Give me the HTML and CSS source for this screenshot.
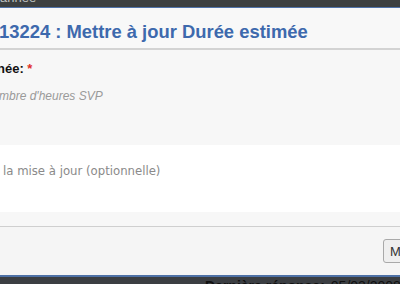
FILE: index.html
```html
<!DOCTYPE html>
<html lang="fr">
<head>
<meta charset="utf-8">
<link rel="stylesheet" href="styles.css">
</head>
<body>
<div class="page-top"><span class="page-top-text">année</span></div>
<div class="modal">
  <div class="modal-header">
    <h3 class="modal-title">13224 : Mettre à jour Durée estimée</h3>
  </div>
  <div class="modal-body">
    <div class="field-label">née: <span class="req">*</span></div>
    <div class="field-input">mbre d'heures SVP</div>
    <div class="field-textarea"><span class="ta-ph">la mise à jour (optionnelle)</span></div>
  </div>
  <div class="modal-footer">
    <button class="btn">Mettre à jour</button>
  </div>
</div>
<div class="page-bottom"><span class="pb-label">Dernière réponse:</span><span class="pb-date">05/03/2008 1</span></div>
</body>
</html>
```
FILE: styles.css
```css
html, body {
  margin: 0;
  padding: 0;
  width: 400px;
  height: 284px;
  overflow: hidden;
  background: #3b3e3f;
  font-family: "Liberation Sans", Arial, sans-serif;
}
.page-top {
  height: 7px;
  overflow: hidden;
  background: #3d4040;
  border-bottom: 1px solid #4f72a8;
}
.page-top-text {
  display: block;
  margin-top: -9px;
  font-size: 13px;
  line-height: 14px;
  color: #bfc2c2;
}
.modal {
  background: #f7f7f7;
  border-bottom: 2px solid #4e71a6;
}
.modal-header {
  height: 40px;
  border-bottom: 2px solid #d3d3d3;
  display: flex;
  align-items: flex-end;
  background: #f8f8f8;
}
.modal-title {
  margin: 0 0 4px -1px;
  font-size: 18.4px;
  line-height: 24px;
  font-weight: bold;
  color: #3d69ad;
  white-space: nowrap;
}
.modal-body {
  height: 176px;
  display: flex;
  flex-direction: column;
}
.field-label {
  margin: 11px 0 0 -3px;
  font-size: 13px;
  line-height: 15px;
  font-weight: bold;
  color: #111;
}
.req {
  color: #e0302a;
}
.field-input {
  margin: 13px 0 0 -1px;
  font-size: 12px;
  line-height: 14px;
  font-style: italic;
  color: #9a9a9a;
}
.field-textarea {
  margin-top: 42px;
  height: 67px;
  background: #fff;
}
.ta-ph {
  display: block;
  padding: 18px 0 0 3px;
  font-family: "DejaVu Sans Condensed", "DejaVu Sans", sans-serif;
  font-size: 13px;
  line-height: 15px;
  color: #8a8a8a;
  white-space: nowrap;
}
.modal-footer {
  height: 48px;
  border-top: 1px solid #cfcfcf;
  background: #f5f5f5;
  display: flex;
  align-items: flex-start;
  padding-left: 383px;
}
.btn {
  margin-top: 12px;
  height: 24px;
  padding: 0 6px;
  border: 1px solid #a9a9a9;
  border-radius: 3px;
  background: #efefef;
  font-family: "Liberation Sans", Arial, sans-serif;
  font-size: 13px;
  color: #333;
  white-space: nowrap;
}
.page-bottom {
  height: 7px;
  overflow: hidden;
  background: #3b3e42;
  padding-left: 205px;
  display: flex;
  gap: 6px;
  white-space: nowrap;
}
.pb-label, .pb-date {
  display: block;
  margin-top: 1px;
  font-size: 14px;
  line-height: 16px;
  color: #101010;
}
.pb-label {
  font-weight: bold;
}
```
